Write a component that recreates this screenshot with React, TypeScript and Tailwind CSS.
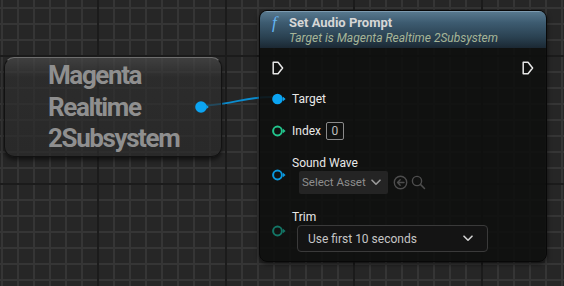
import React from 'react'

function ExecPin() {
  return (
    <svg width="12" height="14" viewBox="0 0 12 14">
      <path d="M1.2 1.2 H6 L10.6 7 L6 12.8 H1.2 Z" fill="none" stroke="#e6e6e6" strokeWidth="1.5" strokeLinejoin="round" />
    </svg>
  )
}

function DataPin({ color, filled }: { color: string; filled?: boolean }) {
  return (
    <svg width="14" height="12" viewBox="0 0 14 12" className="shrink-0">
      <circle cx="5.5" cy="6" r={filled ? 5.3 : 4.4} fill={filled ? color : 'none'} stroke={color} strokeWidth={filled ? 0 : 2} />
      <path d="M11 3.8 L13.6 6 L11 8.2 Z" fill={color} />
    </svg>
  )
}

function Chevron({ color }: { color: string }) {
  return (
    <svg width="10" height="7" viewBox="0 0 10 7" className="shrink-0">
      <polyline points="1,1.2 5,5.2 9,1.2" fill="none" stroke={color} strokeWidth="1.6" strokeLinecap="round" strokeLinejoin="round" />
    </svg>
  )
}

function CommentNode() {
  return (
    <div className="absolute left-[4px] top-[57px] w-[218px] h-[100px] rounded-[10px] border border-[#121212] border-t-[#6e6e6e] bg-[linear-gradient(to_bottom,rgba(72,72,72,0.75),rgba(46,46,46,0.7)_20%,rgba(42,42,42,0.72))] shadow-[0_3px_4px_rgba(0,0,0,0.55)]">
      <div className="pl-[43px] pt-[2px] text-[26px] leading-[31.5px] font-bold tracking-[-1.4px] text-[#8f8f8f]">
        <div>Magenta</div>
        <div>Realtime</div>
        <div>2Subsystem</div>
      </div>
      <div className="absolute left-[190px] top-[43px]">
        <svg width="14" height="12" viewBox="0 0 14 12">
          <circle cx="6" cy="6" r="5.8" fill="#0ba4f2" />
          <path d="M11.4 4 L13.8 6 L11.4 8 Z" fill="#0ba4f2" />
        </svg>
      </div>
    </div>
  )
}

function FunctionNode() {
  return (
    <div className="absolute left-[259px] top-[10px] w-[288px] h-[252px] rounded-[8px] border border-[#080808] bg-[rgba(14,16,14,0.9)] shadow-[0_2px_5px_rgba(0,0,0,0.6)] overflow-hidden">
      <div className="h-[37px] flex pl-[12px] pt-[3px] bg-[linear-gradient(to_bottom,#57788e_0%,#3d5b70_30%,#2a4151_70%,#1b2833_100%)] border-t border-[#7d9bb0]">
        <div className="w-[17px] text-[17px] leading-[15px] italic text-[#63b4f2] font-['Liberation_Serif',serif]">f</div>
        <div className="flex flex-col">
          <div className="text-[13px] leading-[15px] font-bold text-[#d6d6d6]">Set Audio Prompt</div>
          <div className="text-[12px] leading-[15px] mt-[1px] italic text-[#a6b598]">Target is Magenta Realtime 2Subsystem</div>
        </div>
      </div>

      <div className="flex justify-between px-[12px] mt-[13px]">
        <ExecPin />
        <ExecPin />
      </div>

      <div className="flex items-center h-[14px] mt-[17px] pl-[12px]">
        <DataPin color="#0ba4f2" filled />
        <span className="ml-[6px] text-[12px] text-[#e8e8e8]">Target</span>
      </div>

      <div className="flex items-center h-[18px] mt-[16px] pl-[12px]">
        <DataPin color="#22c48c" />
        <span className="ml-[6px] text-[12px] text-[#e8e8e8]">Index</span>
        <div className="ml-[5px] w-[18px] h-[18px] border border-[#8a8a8a] rounded-[2px] flex items-center justify-center text-[12px] text-[#bdbdbd]">0</div>
      </div>

      <div className="flex items-center mt-[16px] pl-[12px]">
        <DataPin color="#0a98de" />
        <div className="ml-[6px] flex flex-col">
          <span className="text-[12px] leading-[14px] text-[#e8e8e8]">Sound Wave</span>
          <div className="flex items-center mt-[1px]">
            <div className="ml-[7px] w-[89px] h-[23px] bg-[#242424] rounded-[2px] flex items-center pl-[3px] pr-[7px] text-[11.5px] text-[#8e8e8e] whitespace-nowrap">
              <span>Select Asset</span>
              <span className="ml-auto"><Chevron color="#9a9a9a" /></span>
            </div>
            <svg width="15" height="15" viewBox="0 0 15 15" className="ml-[5px]">
              <circle cx="7.5" cy="7.5" r="6.2" fill="none" stroke="#4d4d4d" strokeWidth="1.4" />
              <path d="M11 7.5 H4.5 M7.2 4.8 L4.5 7.5 L7.2 10.2" fill="none" stroke="#4d4d4d" strokeWidth="1.4" strokeLinecap="round" strokeLinejoin="round" />
            </svg>
            <svg width="15" height="15" viewBox="0 0 15 15" className="ml-[3px]">
              <circle cx="6" cy="6" r="4.6" fill="none" stroke="#4d4d4d" strokeWidth="1.4" />
              <path d="M9.4 9.4 L13.5 13.5" stroke="#4d4d4d" strokeWidth="1.5" strokeLinecap="round" />
            </svg>
          </div>
        </div>
      </div>

      <div className="flex items-center mt-[16px] pl-[12px]">
        <DataPin color="#137565" />
        <div className="ml-[6px] flex flex-col">
          <span className="text-[12px] leading-[14px] text-[#e8e8e8]">Trim</span>
          <div className="ml-[5px] mt-[1px] w-[191px] h-[27px] rounded-[4px] border border-[#3a3a3a] bg-[#141414] flex items-center justify-between pl-[10px] pr-[14px] text-[12px] text-[#c6c6c6]">
            <span>Use first 10 seconds</span>
            <Chevron color="#d0d0d0" />
          </div>
        </div>
      </div>
    </div>
  )
}

export default function App() {
  return (
    <div className="relative w-[564px] h-[286px] overflow-hidden font-['Roboto',sans-serif] bg-[#262626] bg-[image:linear-gradient(to_right,#1b1b1b_2px,transparent_2px),linear-gradient(to_bottom,#1b1b1b_2px,transparent_2px),linear-gradient(to_right,#353535_2px,transparent_2px),linear-gradient(to_bottom,#353535_2px,transparent_2px)] bg-[size:128px_128px,128px_128px,16px_16px,16px_16px] bg-[position:97px_55px,97px_55px,1px_7px,1px_7px]">
      <svg className="absolute left-0 top-0" width="564" height="286">
        <path d="M206 105.5 C 236 104, 244 97, 272 97" fill="none" stroke="#0b8ccf" strokeWidth="1.8" />
      </svg>
      <CommentNode />
      <FunctionNode />
    </div>
  )
}
